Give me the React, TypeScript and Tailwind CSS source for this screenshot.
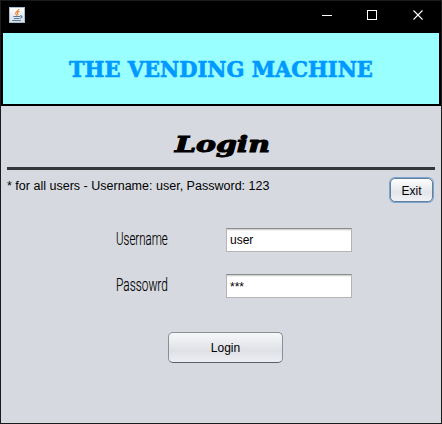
import { useLayoutEffect, useRef, useState } from "react";

type FitProps = { text: string; width: number; className: string };

/* Condenses or stretches a line of text to an exact width. */
function FitText({ text, width, className }: FitProps) {
  const ref = useRef<HTMLSpanElement>(null);
  const [scale, setScale] = useState(1);
  useLayoutEffect(() => {
    if (ref.current) setScale(width / ref.current.offsetWidth);
  }, [width, text]);
  return (
    <span className="block whitespace-nowrap" style={{ width }}>
      <span
        ref={ref}
        className={`inline-block origin-left ${className}`}
        style={{ transform: `scaleX(${scale})` }}
      >
        {text}
      </span>
    </span>
  );
}

function JavaIcon() {
  return (
    <svg width="16" height="16" viewBox="0 0 16 16" fill="none">
      <defs>
        <linearGradient id="tile" x1="0" y1="0" x2="0" y2="1">
          <stop offset="0" stopColor="#ffffff" />
          <stop offset="1" stopColor="#d3dce4" />
        </linearGradient>
      </defs>
      <rect x=".5" y=".5" width="15" height="15" fill="url(#tile)" stroke="#a9bccb" />
      <path d="M9.800 2C10 4 6.200 4.500 6.600 6.400C6.800 7.300 7.700 7.700 7.600 8.600M10.500 4.300C8.500 5 8 5.800 8.700 6.600C9.200 7.300 8.900 7.900 8.400 8.400" stroke="#ed8639" strokeWidth="1.100" />
      <path d="M4.300 9.500H11M5 11.500H10.500M3.300 13.500H11.800M11 9C13.600 8.200 13.800 10.700 11 11.200" stroke="#54799a" strokeWidth="1.100" />
    </svg>
  );
}

function TitleBar() {
  return (
    <div className="flex h-[30px] justify-between bg-black">
      <div className="pt-[6px] pl-2">
        <JavaIcon />
      </div>
      <svg width="138" height="30" viewBox="0 0 138 30" fill="none" stroke="#fff">
        <path d="M19 14.500H29" />
        <rect x="64.500" y="9.500" width="9" height="9" />
        <path d="M110.500 9.500L119.500 18.500M119.500 9.500L110.500 18.500" strokeWidth="1.100" />
      </svg>
    </div>
  );
}

const fieldClass =
  "h-6 w-[126px] border border-[#b4b4b4] border-t-[#8d8d8d] bg-white pl-[3px] text-[12px] text-black shadow-[inset_0_1px_0_#d2d2d2,inset_0_2px_0_#f3f3f3] outline-none";

const labelClass =
  "font-['Roboto','Liberation_Sans',sans-serif] text-[19px] leading-[22px] font-light [-webkit-text-stroke:0.15px_black]";

export default function App() {
  return (
    <div className="flex h-[424px] w-[442px] flex-col overflow-hidden border border-[#1b1b1b] bg-[#d6d9df] font-['Liberation_Sans',sans-serif] text-[12px] text-black">
      <TitleBar />
      <header className="h-[75px] w-full border-2 border-black bg-[#99ffff] pt-[20px] pl-[66px]">
        <FitText
          text="THE VENDING MACHINE"
          width={304}
          className="font-['DejaVu_Serif',serif] text-[23px] leading-8 font-bold text-[#0099ff] [-webkit-text-stroke:0.7px_#0099ff]"
        />
      </header>
      <main className="flex h-[317px] flex-col">
        <div className="h-[61px] pt-[22px] pl-[174px]">
          <FitText
            text="Login"
            width={95}
            className="font-['DejaVu_Serif',serif] text-[22px] leading-8 font-bold italic [-webkit-text-stroke:1.1px_black]"
          />
        </div>
        <div className="mx-[6px] h-[3px] w-[428px] shrink-0 bg-[#343639]" />
        <div className="flex h-[58px] justify-between pr-[8px] pl-[6px]">
          <div className="pt-[7px]">
            <FitText text="* for all users - Username: user, Password: 123" width={262} className="text-[12px] leading-4" />
          </div>
          <button className="mt-[8px] h-[24px] w-[43px] rounded-[5px] border border-[#657f9d] bg-linear-to-b from-white via-[#e3e5e9] via-60% to-[#f0f2f6] pt-px text-[12px] leading-4 shadow-[0_0_0_1px_#7aa5d0]">
            Exit
          </button>
        </div>
        <div className="flex h-[46px] pl-[115px]">
          <div className="w-[110px]">
            <FitText text="Username" width={52} className={labelClass} />
          </div>
          <input className={fieldClass} defaultValue="user" />
        </div>
        <div className="flex h-[58px] pl-[115px]">
          <div className="w-[110px]">
            <FitText text="Passowrd" width={52} className={labelClass} />
          </div>
          <input className={`${fieldClass} pt-0.5`} defaultValue="***" />
        </div>
        <button className="ml-[167px] h-[31px] w-[115px] shrink-0 rounded-[5px] border border-[#8b8e93] border-b-[#5b5e63] bg-linear-to-b from-[#f7f8fa] via-[#dfe1e6] via-60% to-[#eceef4] pt-px text-[12px]">
          Login
        </button>
      </main>
    </div>
  );
}
